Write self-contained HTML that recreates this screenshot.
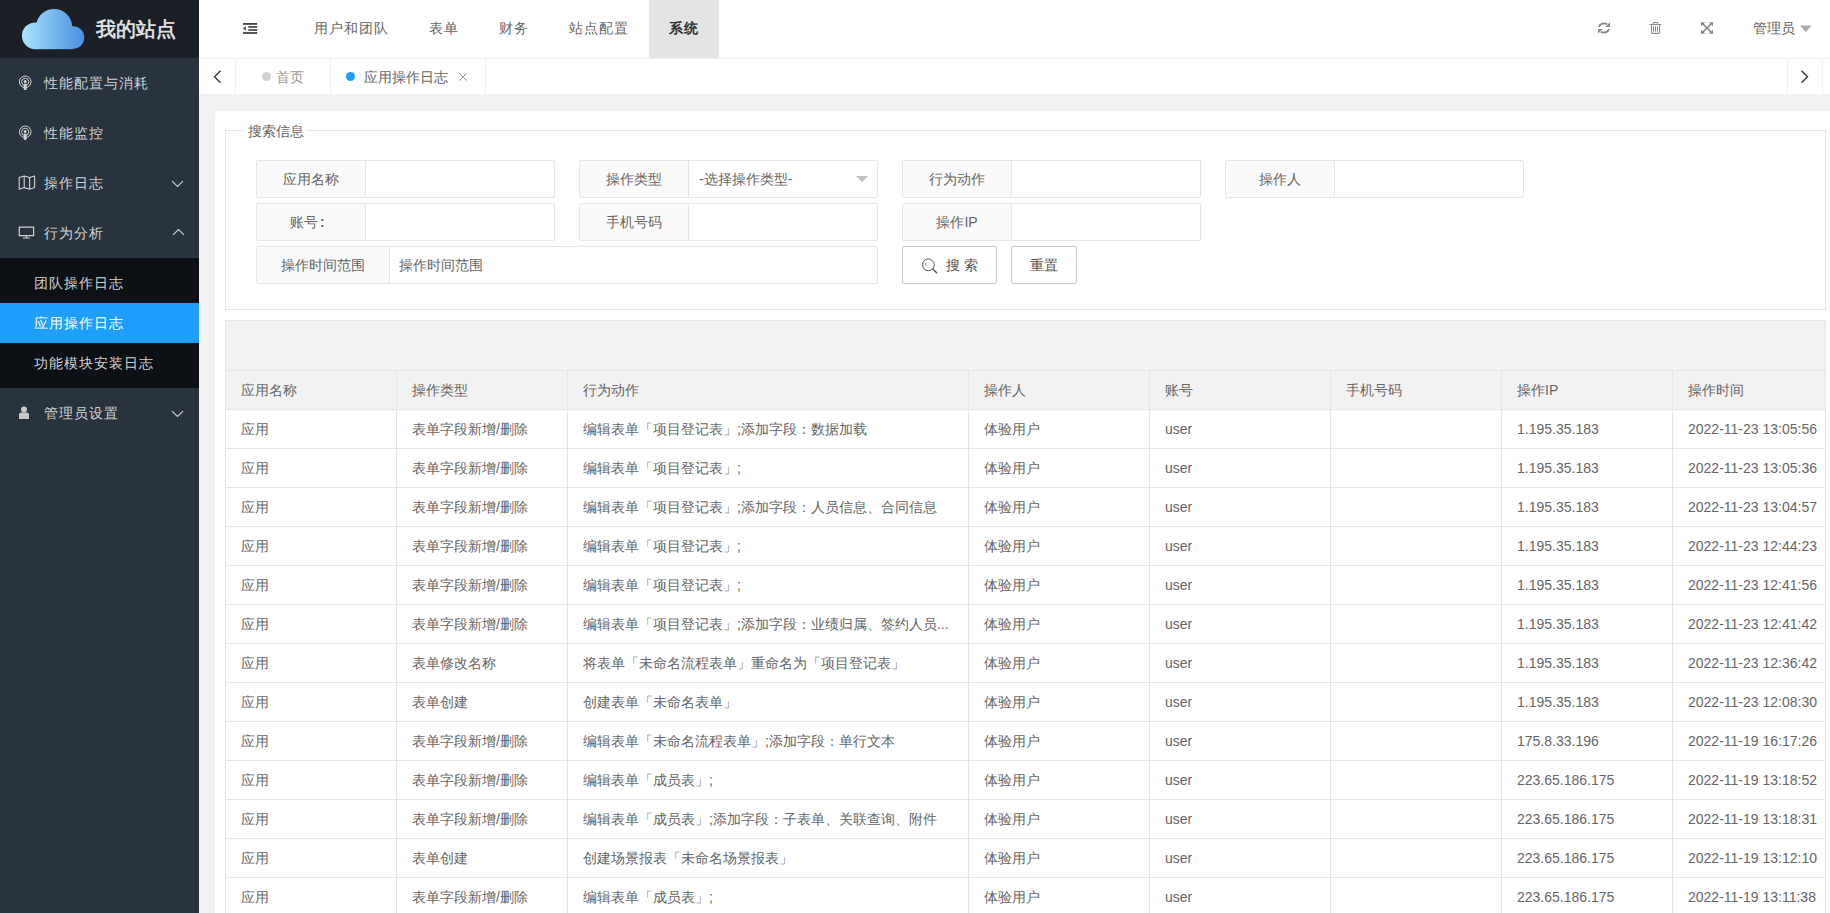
<!DOCTYPE html><html><head><meta charset="utf-8"><style>
*{margin:0;padding:0;box-sizing:border-box}
html,body{width:1830px;height:913px;overflow:hidden;background:#f2f2f2;font-family:"Liberation Sans",sans-serif;color:#666;font-size:14px}
.abs{position:absolute}
.nw{white-space:nowrap}
#side{position:absolute;left:0;top:0;width:199px;height:913px;background:#28333e}
#logo{position:absolute;left:0;top:0;width:199px;height:58px;background:#1b1f26}
#logo .t{position:absolute;left:96px;top:15px;font-size:20px;font-weight:bold;color:#ddd;line-height:28px;white-space:nowrap}
.mi{position:absolute;left:0;width:199px;height:50px;color:#d2d2d2;font-size:14px}
.mi .tx{position:absolute;left:44px;top:15px;line-height:20px;white-space:nowrap;letter-spacing:1px}
#sub{position:absolute;left:0;top:258px;width:199px;height:130px;background:#0d1014}
.si{position:absolute;left:0;width:199px;height:40px;color:#d2d2d2;font-size:14px}
.si .tx{position:absolute;left:34px;top:10px;line-height:20px;white-space:nowrap;letter-spacing:1px}
.si.on{background:#1e9fff;color:#fff}
#head{position:absolute;left:199px;top:0;width:1631px;height:58px;background:#fff}
.nav{position:absolute;top:18px;line-height:20px;color:#666;white-space:nowrap;letter-spacing:1px;font-size:14px}
#tabs{position:absolute;left:199px;top:58px;width:1631px;height:36px;background:#fff;border-top:1px solid #f0f0f0}
.tabt{position:absolute;top:8px;line-height:20px;white-space:nowrap;font-size:14px}
.vb{position:absolute;top:0;width:1px;height:35px;background:#f0f0f0}
#card{position:absolute;left:215px;top:111px;width:1630px;height:900px;background:#fff;border-radius:3px}
.fs{position:absolute;border:1px solid #e6e6e6}
.blk{position:absolute;height:38px;border:1px solid #e6e6e6;background:#fff;border-radius:2px}
.lab{position:absolute;left:0;top:0;height:36px;background:#fafafa;border-right:1px solid #e6e6e6;text-align:center;line-height:36px;color:#666;font-size:14px;white-space:nowrap}
.btn{position:absolute;height:38px;border:1px solid #c9c9c9;background:#fff;border-radius:2px;color:#555;font-size:14px;line-height:36px;text-align:center;white-space:nowrap}
table{position:absolute;left:225px;top:370px;width:1600px;border-collapse:collapse;table-layout:fixed}
td,th{border:1px solid #e6e6e6;height:39px;padding:0 15px;font-weight:normal;text-align:left;white-space:nowrap;overflow:hidden;font-size:14px;color:#666;line-height:20px}
th{background:#f2f2f2}
td{background:#fff}
</style></head><body>
<div id="side"><div id="logo">
<svg class="abs" style="left:0;top:0" width="100" height="58" viewBox="0 0 100 58"><defs><linearGradient id="cg" gradientUnits="userSpaceOnUse" x1="22" y1="0" x2="84" y2="0"><stop offset="0" stop-color="#aae6fc"/><stop offset="0.5" stop-color="#78b9ee"/><stop offset="1" stop-color="#4a8fe0"/></linearGradient></defs><g fill="url(#cg)"><circle cx="35.3" cy="35.8" r="13.4"/><circle cx="54.1" cy="27" r="18.1"/><circle cx="73" cy="37.5" r="11.3"/><rect x="35.3" y="27" width="37.7" height="22.2"/></g></svg>
<div class="t">我的站点</div></div>
<div class="mi" style="top:58px"><svg class="abs" style="left:18px;top:17px" width="14" height="16" viewBox="0 0 14 16"><g fill="none" stroke="#d2d2d2" stroke-width="1"><circle cx="7.2" cy="6.8" r="5.8"/><circle cx="7.2" cy="6.8" r="3.6"/></g><circle cx="7.2" cy="6.6" r="1.5" fill="#d2d2d2"/><rect x="5.7" y="8.6" width="3" height="6.4" rx="1.3" fill="#d2d2d2"/></svg><div class="tx">性能配置与消耗</div></div>
<div class="mi" style="top:108px"><svg class="abs" style="left:18px;top:17px" width="14" height="16" viewBox="0 0 14 16"><g fill="none" stroke="#d2d2d2" stroke-width="1"><circle cx="7.2" cy="6.8" r="5.8"/><circle cx="7.2" cy="6.8" r="3.6"/></g><circle cx="7.2" cy="6.6" r="1.5" fill="#d2d2d2"/><rect x="5.7" y="8.6" width="3" height="6.4" rx="1.3" fill="#d2d2d2"/></svg><div class="tx">性能监控</div></div>
<div class="mi" style="top:158px"><svg class="abs" style="left:18px;top:17px" width="18" height="15" viewBox="0 0 18 15"><path d="M1.2 2.6 L6.2 0.9 L11.6 2.6 L16.6 0.9 L16.6 12.6 L11.6 14.2 L6.2 12.6 L1.2 14.2 Z M6.2 0.9 V12.6 M11.6 2.6 V14.2" fill="none" stroke="#d2d2d2" stroke-width="1.1" stroke-linejoin="round"/></svg><div class="tx">操作日志</div><svg class="abs" style="left:171px;top:22px" width="13" height="8" viewBox="0 0 13 8"><path d="M1 1.2 L6.5 6.5 L12 1.2" fill="none" stroke="#d2d2d2" stroke-width="1.1"/></svg></div>
<div class="mi" style="top:208px"><svg class="abs" style="left:18px;top:18px" width="17" height="13" viewBox="0 0 17 13"><path d="M1.3 1.2 H15.6 V9.6 H1.3 Z" fill="none" stroke="#d2d2d2" stroke-width="1.2"/><path d="M8.4 9.8 V11.8 M5 12 H11.8" stroke="#d2d2d2" stroke-width="1.1"/></svg><div class="tx">行为分析</div><svg class="abs" style="left:172px;top:20px" width="13" height="8" viewBox="0 0 13 8"><path d="M1 6.8 L6.5 1.5 L12 6.8" fill="none" stroke="#d2d2d2" stroke-width="1.1"/></svg></div>
<div id="sub"><div class="si" style="top:5px"><div class="tx">团队操作日志</div></div><div class="si on" style="top:45px"><div class="tx">应用操作日志</div></div><div class="si" style="top:85px"><div class="tx">功能模块安装日志</div></div></div>
<div class="mi" style="top:388px"><svg class="abs" style="left:18px;top:18px" width="12" height="14" viewBox="0 0 12 14"><circle cx="6" cy="3.5" r="3" fill="#c8c8c8"/><path d="M1 13 V8.6 Q1 6.6 3 6.6 H9 Q11 6.6 11 8.6 V13 Z" fill="#c8c8c8"/></svg><div class="tx">管理员设置</div><svg class="abs" style="left:171px;top:22px" width="13" height="8" viewBox="0 0 13 8"><path d="M1 1.2 L6.5 6.5 L12 1.2" fill="none" stroke="#d2d2d2" stroke-width="1.1"/></svg></div>
</div>
<div id="head">
<svg class="abs" style="left:44px;top:23px" width="15" height="11" viewBox="0 0 15 11"><g fill="#444"><rect x="0" y="0" width="14.2" height="1.8"/><rect x="5.3" y="3.1" width="8.9" height="1.7"/><rect x="5.3" y="6.2" width="8.9" height="1.7"/><rect x="0" y="9.1" width="14.2" height="1.8"/><path d="M0 5.5 L2.8 3.2 V7.8 Z"/></g></svg>
<div class="nav" style="left:115px">用户和团队</div>
<div class="nav" style="left:230px">表单</div>
<div class="nav" style="left:300px">财务</div>
<div class="nav" style="left:370px">站点配置</div>
<div class="abs" style="left:450px;top:0;width:70px;height:58px;background:#e4e4e4"></div>
<div class="nav" style="left:470px;color:#333;font-weight:bold">系统</div>
<svg class="abs" style="left:1398px;top:21px" width="14" height="14" viewBox="0 0 14 14"><g fill="none" stroke="#8a8a8a" stroke-width="1.9"><path d="M1.9 5.9 A5.4 4.6 0 0 1 10.2 3.2"/><path d="M12.1 8 A5.4 4.6 0 0 1 3.8 10.8"/></g><path d="M13 1.3 V5.9 H8.3 Z" fill="#8a8a8a"/><path d="M1 12.4 V8 H5.6 Z" fill="#8a8a8a"/></svg>
<svg class="abs" style="left:1449px;top:20px" width="15" height="16" viewBox="0 0 15 16"><g fill="none" stroke="#8a8a8a" stroke-width="1.05" stroke-linecap="round"><path d="M1.9 4.4 H12.9"/><path d="M5.2 4.3 V3.2 Q5.2 2.4 6 2.4 H8.9 Q9.7 2.4 9.7 3.2 V4.3"/><path d="M3.5 4.5 V12.4 Q3.5 13.35 4.5 13.35 H10.6 Q11.6 13.35 11.6 12.4 V4.5"/><path d="M5.45 6.4 V11.3 M7.5 6.4 V11.3 M9.5 6.4 V11.3"/></g></svg>
<svg class="abs" style="left:1502px;top:22px" width="12" height="12" viewBox="0 0 12 11.7"><g fill="#8a8a8a"><path d="M0 0 H4.3 L0 4 Z M12 0 V4 L7.7 0 Z M0 11.7 V7.7 L4.3 11.7 Z M12 11.7 H7.7 L12 7.7 Z"/></g><path d="M1.5 1.5 L10.5 10.2 M10.5 1.5 L1.5 10.2" stroke="#8a8a8a" stroke-width="1.5"/></svg>
<div class="nav" style="left:1554px;color:#666;font-size:14px;letter-spacing:0">管理员</div>
<svg class="abs" style="left:1601px;top:25px" width="12" height="8" viewBox="0 0 12 8"><path d="M0 0.5 H11.6 L5.8 7 Z" fill="#aaa"/></svg>
</div>
<div id="tabs">
<svg class="abs" style="left:14px;top:11px" width="9" height="14" viewBox="0 0 9 14"><path d="M7.5 0.8 L1.5 6.8 L7.5 12.8" fill="none" stroke="#333" stroke-width="1.3"/></svg>
<div class="vb" style="left:36px"></div>
<div class="abs" style="left:63px;top:13px;width:9px;height:9px;border-radius:50%;background:#d2d2d2"></div>
<div class="tabt" style="left:77px;color:#999">首页</div>
<div class="vb" style="left:131px"></div>
<div class="abs" style="left:147px;top:13px;width:9px;height:9px;border-radius:50%;background:#1e9fff"></div>
<div class="tabt" style="left:165px;color:#666">应用操作日志</div>
<svg class="abs" style="left:260px;top:14px" width="8" height="8" viewBox="0 0 8 8"><path d="M0.3 0.3 L7.7 7.7 M7.7 0.3 L0.3 7.7" stroke="#999" stroke-width="1"/></svg>
<div class="vb" style="left:286px"></div>
<div class="vb" style="left:1588px"></div>
<svg class="abs" style="left:1601px;top:11px" width="9" height="14" viewBox="0 0 9 14"><path d="M1.5 0.8 L7.5 6.8 L1.5 12.8" fill="none" stroke="#333" stroke-width="1.3"/></svg>
<div class="vb" style="left:1623px"></div>
</div>
<div id="card"></div>
<div class="fs" style="left:225px;top:130px;width:1601px;height:180px"></div>
<div class="abs nw" style="left:246px;top:121px;padding:0 2px;background:#fff;line-height:20px;color:#666">搜索信息</div>
<div class="blk" style="left:256px;top:160px;width:299px"><div class="lab" style="width:109px">应用名称</div></div>
<div class="blk" style="left:579px;top:160px;width:299px"><div class="lab" style="width:109px">操作类型</div><div class="abs nw" style="left:119px;top:0;line-height:36px;color:#666">-选择操作类型-</div><svg class="abs" style="left:276px;top:15px" width="12" height="7" viewBox="0 0 12 7"><path d="M0 0 H12 L6 6 Z" fill="#c2c2c2"/></svg></div>
<div class="blk" style="left:902px;top:160px;width:299px"><div class="lab" style="width:109px">行为动作</div></div>
<div class="blk" style="left:1225px;top:160px;width:299px"><div class="lab" style="width:109px">操作人</div></div>
<div class="blk" style="left:256px;top:203px;width:299px"><div class="lab" style="width:109px;text-align:left;padding-left:33px">账号<span style="font-weight:bold;margin-left:2px">:</span></div></div>
<div class="blk" style="left:579px;top:203px;width:299px"><div class="lab" style="width:109px">手机号码</div></div>
<div class="blk" style="left:902px;top:203px;width:299px"><div class="lab" style="width:109px">操作IP</div></div>
<div class="blk" style="left:256px;top:246px;width:622px"><div class="lab" style="width:133px">操作时间范围</div><div class="abs nw" style="left:142px;top:0;line-height:36px;color:#666">操作时间范围</div></div>
<div class="btn" style="left:902px;top:246px;width:95px"><svg class="abs" style="left:19px;top:11px" width="17" height="17" viewBox="0 0 17 17"><circle cx="6.4" cy="6.8" r="5.9" fill="none" stroke="#555" stroke-width="1"/><path d="M10.8 11 L14.6 14.7" stroke="#555" stroke-width="1.5" stroke-linecap="round"/><path d="M4.2 4.5 Q3.2 5.8 3.8 7.6" fill="none" stroke="#777" stroke-width="0.8"/></svg><span class="abs" style="left:43px;top:0">搜 索</span></div>
<div class="btn" style="left:1011px;top:246px;width:66px">重置</div>
<div class="abs" style="left:225px;top:320px;width:1601px;height:51px;background:#f2f2f2;border:1px solid #e6e6e6;border-bottom:none"></div>
<table><colgroup><col style="width:171px"><col style="width:171px"><col style="width:401px"><col style="width:181px"><col style="width:181px"><col style="width:171px"><col style="width:171px"><col style="width:153px"></colgroup>
<tr><th>应用名称</th><th>操作类型</th><th>行为动作</th><th>操作人</th><th>账号</th><th>手机号码</th><th>操作IP</th><th>操作时间</th></tr>
<tr><td>应用</td><td>表单字段新增/删除</td><td>编辑表单「项目登记表」;添加字段：数据加载</td><td>体验用户</td><td>user</td><td></td><td>1.195.35.183</td><td>2022-11-23 13:05:56</td></tr>
<tr><td>应用</td><td>表单字段新增/删除</td><td>编辑表单「项目登记表」;</td><td>体验用户</td><td>user</td><td></td><td>1.195.35.183</td><td>2022-11-23 13:05:36</td></tr>
<tr><td>应用</td><td>表单字段新增/删除</td><td>编辑表单「项目登记表」;添加字段：人员信息、合同信息</td><td>体验用户</td><td>user</td><td></td><td>1.195.35.183</td><td>2022-11-23 13:04:57</td></tr>
<tr><td>应用</td><td>表单字段新增/删除</td><td>编辑表单「项目登记表」;</td><td>体验用户</td><td>user</td><td></td><td>1.195.35.183</td><td>2022-11-23 12:44:23</td></tr>
<tr><td>应用</td><td>表单字段新增/删除</td><td>编辑表单「项目登记表」;</td><td>体验用户</td><td>user</td><td></td><td>1.195.35.183</td><td>2022-11-23 12:41:56</td></tr>
<tr><td>应用</td><td>表单字段新增/删除</td><td>编辑表单「项目登记表」;添加字段：业绩归属、签约人员...</td><td>体验用户</td><td>user</td><td></td><td>1.195.35.183</td><td>2022-11-23 12:41:42</td></tr>
<tr><td>应用</td><td>表单修改名称</td><td>将表单「未命名流程表单」重命名为「项目登记表」</td><td>体验用户</td><td>user</td><td></td><td>1.195.35.183</td><td>2022-11-23 12:36:42</td></tr>
<tr><td>应用</td><td>表单创建</td><td>创建表单「未命名表单」</td><td>体验用户</td><td>user</td><td></td><td>1.195.35.183</td><td>2022-11-23 12:08:30</td></tr>
<tr><td>应用</td><td>表单字段新增/删除</td><td>编辑表单「未命名流程表单」;添加字段：单行文本</td><td>体验用户</td><td>user</td><td></td><td>175.8.33.196</td><td>2022-11-19 16:17:26</td></tr>
<tr><td>应用</td><td>表单字段新增/删除</td><td>编辑表单「成员表」;</td><td>体验用户</td><td>user</td><td></td><td>223.65.186.175</td><td>2022-11-19 13:18:52</td></tr>
<tr><td>应用</td><td>表单字段新增/删除</td><td>编辑表单「成员表」;添加字段：子表单、关联查询、附件</td><td>体验用户</td><td>user</td><td></td><td>223.65.186.175</td><td>2022-11-19 13:18:31</td></tr>
<tr><td>应用</td><td>表单创建</td><td>创建场景报表「未命名场景报表」</td><td>体验用户</td><td>user</td><td></td><td>223.65.186.175</td><td>2022-11-19 13:12:10</td></tr>
<tr><td>应用</td><td>表单字段新增/删除</td><td>编辑表单「成员表」;</td><td>体验用户</td><td>user</td><td></td><td>223.65.186.175</td><td>2022-11-19 13:11:38</td></tr>
</table>
</body></html>
